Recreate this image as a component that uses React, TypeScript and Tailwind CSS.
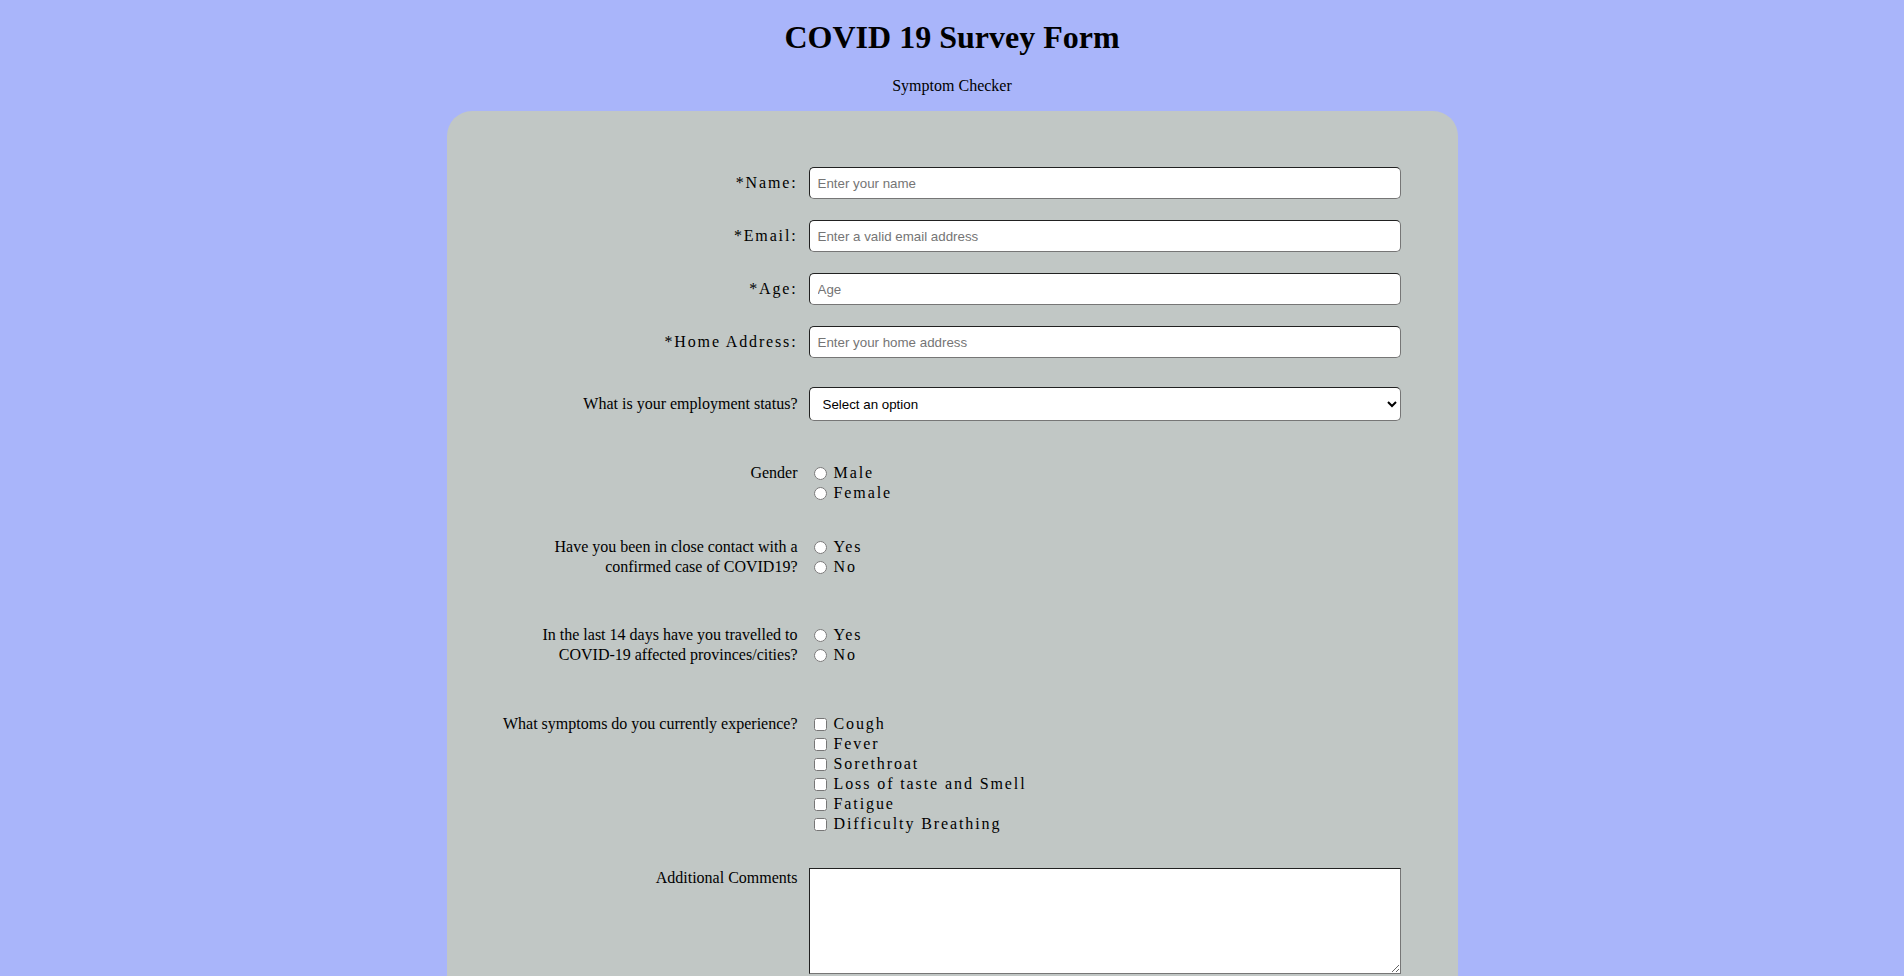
import React from "react";

const serif = "font-['Liberation_Serif','Times_New_Roman',serif]";
const sans = "font-['Liberation_Sans',Arial,sans-serif]";

const textInputs = [
  { id: "name", label: "*Name:", placeholder: "Enter your name", type: "text" },
  { id: "email", label: "*Email:", placeholder: "Enter a valid email address", type: "email" },
  { id: "age", label: "*Age:", placeholder: "Age", type: "number" },
  { id: "address", label: "*Home Address:", placeholder: "Enter your home address", type: "text" },
];

const symptoms = [
  "Cough",
  "Fever",
  "Sorethroat",
  "Loss of taste and Smell",
  "Fatigue",
  "Difficulty Breathing",
];

const inputClass = `w-[592px] bg-white border [border-style:inset] border-[#767676] rounded-[5px] text-[13.33px] text-black placeholder:text-[#757575] ${sans}`;

const Option = ({
  type,
  name,
  value,
  label,
}: {
  type: "radio" | "checkbox";
  name: string;
  value: string;
  label: string;
}) => (
  <div className="flex items-center h-5">
    <input
      type={type}
      name={name}
      value={value}
      id={`${name}-${value}`}
      className="ml-[5px] mr-[7px] w-[13px] h-[13px] m-0"
    />
    <label htmlFor={`${name}-${value}`} className="tracking-[1.9px] text-[16px] leading-5">
      {label}
    </label>
  </div>
);

export default function App() {
  return (
    <div className={`min-h-screen bg-[#a9b5fa] text-black ${serif}`}>
      <h1 className="text-center text-[32px] font-bold leading-[37px] pt-[19px] mb-[21px]">
        COVID 19 Survey Form
      </h1>
      <p className="text-center text-[16px] leading-[18px] mb-[16px]">Symptom Checker</p>

      <form className="mx-auto w-[1011px] bg-[#c1c7c5] rounded-[25px] pt-[56px] pb-[40px]">
        {/* Basic details */}
        <div className="flex flex-col gap-[21px]">
          {textInputs.map((f) => (
            <div key={f.id} className="flex items-center">
              <label
                htmlFor={f.id}
                className="w-[351px] text-right text-[16px] tracking-[1.85px]"
              >
                {f.label}
              </label>
              <input
                id={f.id}
                type={f.type}
                placeholder={f.placeholder}
                className={`ml-[11px] h-[32px] px-[8px] ${inputClass}`}
              />
            </div>
          ))}
        </div>

        {/* Employment */}
        <div className="flex items-center mt-[29px]">
          <label htmlFor="employment" className="w-[351px] text-right text-[16px]">
            What is your employment status?
          </label>
          <select
            id="employment"
            defaultValue=""
            className={`ml-[11px] h-[34px] pl-[9px] pr-[4px] ${inputClass}`}
          >
            <option value="">Select an option</option>
            <option value="employed">Employed</option>
            <option value="unemployed">Unemployed</option>
            <option value="student">Student</option>
          </select>
        </div>

        {/* Gender */}
        <div className="flex items-start mt-[42px]">
          <span className="w-[351px] text-right text-[16px] leading-5">Gender</span>
          <div className="ml-[11px]">
            <Option type="radio" name="gender" value="male" label="Male" />
            <Option type="radio" name="gender" value="female" label="Female" />
          </div>
        </div>

        {/* Close contact */}
        <div className="flex items-start mt-[34px]">
          <span className="w-[351px] text-right text-[16px] leading-5">
            Have you been in close contact with a
            <br />
            confirmed case of COVID19?
          </span>
          <div className="ml-[11px]">
            <Option type="radio" name="contact" value="yes" label="Yes" />
            <Option type="radio" name="contact" value="no" label="No" />
          </div>
        </div>

        {/* Travel */}
        <div className="flex items-start mt-[48px]">
          <span className="w-[351px] text-right text-[16px] leading-5">
            In the last 14 days have you travelled to
            <br />
            COVID-19 affected provinces/cities?
          </span>
          <div className="ml-[11px]">
            <Option type="radio" name="travel" value="yes" label="Yes" />
            <Option type="radio" name="travel" value="no" label="No" />
          </div>
        </div>

        {/* Symptoms */}
        <div className="flex items-start mt-[49px]">
          <span className="w-[351px] text-right text-[16px] leading-5">
            What symptoms do you currently experience?
          </span>
          <div className="ml-[11px]">
            {symptoms.map((s) => (
              <Option key={s} type="checkbox" name="symptoms" value={s} label={s} />
            ))}
          </div>
        </div>

        {/* Comments */}
        <div className="flex items-start mt-[34px]">
          <label htmlFor="comments" className="w-[351px] text-right text-[16px] leading-5">
            Additional Comments
          </label>
          <textarea
            id="comments"
            className={`ml-[11px] w-[592px] h-[106px] bg-white border [border-style:inset] border-[#767676] text-[13.33px] ${sans}`}
          />
        </div>

        <div className="flex justify-center mt-[30px]">
          <button
            type="submit"
            className={`px-4 py-2 bg-white border border-[#767676] rounded-[5px] text-[14px] ${sans}`}
          >
            Submit
          </button>
        </div>
      </form>
    </div>
  );
}
